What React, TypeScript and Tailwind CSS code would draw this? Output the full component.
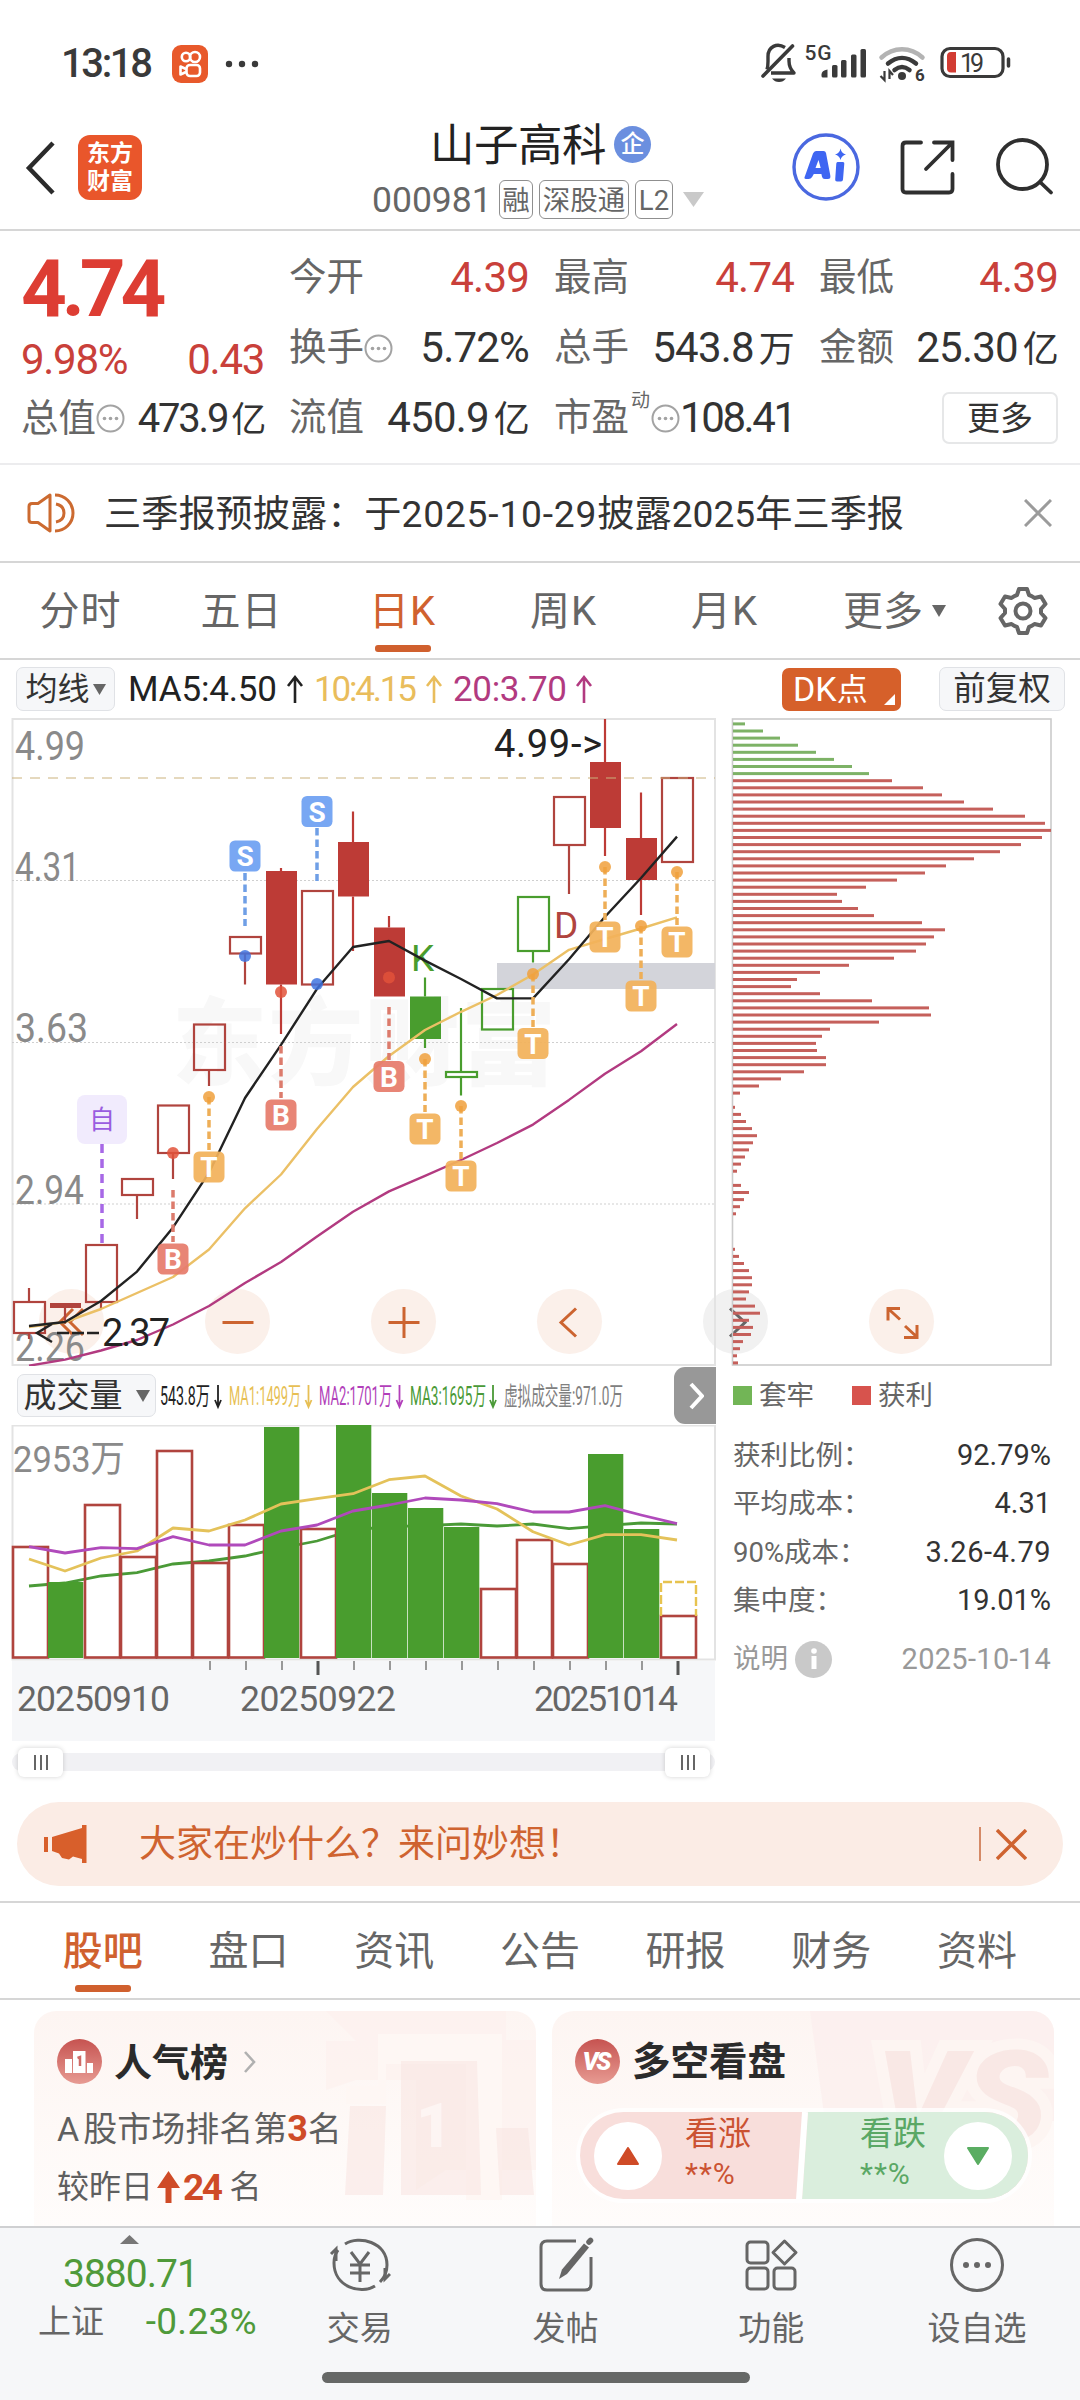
import type { ReactNode } from "react";
import clsx from "clsx";

type Candle = {
  kind: "hollow" | "solid";
  color: string;
  top: number;
  bottom: number;
  high?: number;
  low?: number;
};

const RED = "#bd3b36";
const RED_LINE = "#b0443e";
const GREEN = "#499d2e";

// x centre of the i-th trading day, shared by both charts
const cx = (i: number) => 29 + 36 * i;

const CANDLES: Candle[] = [
  { kind: "hollow", color: RED_LINE, high: 1288, top: 1302, bottom: 1333, low: 1339 },
  { kind: "solid", color: RED_LINE, top: 1303, bottom: 1308, low: 1324 },
  { kind: "hollow", color: RED_LINE, top: 1245, bottom: 1302, low: 1308 },
  { kind: "hollow", color: RED_LINE, top: 1179, bottom: 1195, low: 1219 },
  { kind: "hollow", color: RED_LINE, top: 1105.5, bottom: 1153, low: 1179 },
  { kind: "hollow", color: RED_LINE, top: 1024.5, bottom: 1070, low: 1086 },
  { kind: "hollow", color: RED_LINE, top: 937, bottom: 953.5, low: 984.5 },
  { kind: "solid", color: RED, high: 868, top: 871, bottom: 984.5, low: 1034 },
  { kind: "hollow", color: RED_LINE, top: 891, bottom: 984.5 },
  { kind: "solid", color: RED, high: 811.5, top: 842, bottom: 896.5, low: 951 },
  { kind: "solid", color: RED, high: 916, top: 927.5, bottom: 996.5 },
  { kind: "solid", color: GREEN, high: 977.5, top: 996.5, bottom: 1039, low: 1048 },
  { kind: "hollow", color: GREEN, high: 1008, top: 1072, bottom: 1077, low: 1095.5 },
  { kind: "hollow", color: GREEN, top: 989, bottom: 1029.5 },
  { kind: "hollow", color: GREEN, top: 897, bottom: 951, low: 962.5 },
  { kind: "hollow", color: RED_LINE, top: 797, bottom: 845, low: 894 },
  { kind: "solid", color: RED, high: 719, top: 762, bottom: 828, low: 856 },
  { kind: "solid", color: RED, high: 792.5, top: 838, bottom: 880, low: 915 },
  { kind: "hollow", color: RED_LINE, top: 778, bottom: 862 },
];

const MA5 = [1326, 1322, 1301, 1271.6, 1227.4, 1172.7, 1098, 1044.8, 988.8, 947, 941, 960.6, 979, 998.4, 998.4, 959.3, 916.8, 878, 836.6];
const MA10 = [1327, 1322, 1309, 1293, 1277, 1249.5, 1208.3, 1174.5, 1129, 1087, 1056, 1030, 1011.8, 995, 974.5, 949.8, 939, 928.5, 917.3];
const MA20 = [1365.7, 1359.6, 1350.5, 1340, 1324.5, 1306, 1283, 1262, 1236.5, 1211.8, 1191.4, 1175.8, 1160, 1143, 1124.6, 1099.9, 1073.8, 1051.3, 1024];

const MARKS = [
  { i: 6, t: "S", box: 840.5, from: 873, to: 926, dot: 956 },
  { i: 8, t: "S", box: 796, from: 828, to: 881, dot: 984 },
  { i: 7, t: "B", box: 1099.5, from: 1046, to: 1098, dot: 992 },
  { i: 4, t: "B", box: 1243.5, from: 1190, to: 1242, dot: 1153 },
  { i: 10, t: "B", box: 1061, from: 1007, to: 1060, dot: 977.5 },
  { i: 5, t: "T", box: 1151.5, from: 1097, to: 1150, dot: 1097 },
  { i: 11, t: "T", box: 1113.5, from: 1059, to: 1112, dot: 1059 },
  { i: 12, t: "T", box: 1160.5, from: 1106, to: 1159, dot: 1106 },
  { i: 14, t: "T", box: 1028, from: 974, to: 1027, dot: 974 },
  { i: 16, t: "T", box: 921.5, from: 867, to: 920, dot: 867 },
  { i: 17, t: "T", box: 980.5, from: 926, to: 979, dot: 926 },
  { i: 18, t: "T", box: 926.5, from: 872, to: 925, dot: 872 },
];

const MARK_COLORS: Record<string, { box: string; line: string; dot: string }> = {
  S: { box: "#6ea0f2", line: "#6f9fe6", dot: "#3f74e0" },
  B: { box: "#e67c6c", line: "#dc7b6c", dot: "#e2523a" },
  T: { box: "#f2b15a", line: "#eeae57", dot: "#f0a03c" },
};

const TRAPPED = [12, 30, 47, 65, 83, 101, 119, 136];
const PROFIT = [
  159, 190, 209, 231, 260, 292, 312, 318, 309, 288, 267, 241, 213, 192, 164, 133, 104, 109, 125, 141, 189, 212, 201, 193,
  183, 161, 116, 87, 64, 58, 87, 139, 196, 198, 146, 97, 89, 83, 84, 93, 93, 71, 48, 26, 7, 0, 2, 8, 13, 19, 24, 20, 16, 12,
  8, 4, 0, 8, 16, 11, 7, 3, 0, 0, 0, 0, 2, 6, 11, 16, 19, 19, 16, 13, 22, 27, 16, 20, 18, 10, 7, 4, 5,
];

const VOLUMES: [number, boolean][] = [
  [1547, true], [1582, false], [1505, true], [1557, true], [1451, true], [1563, true], [1525, true],
  [1427, false], [1529, true], [1425, false], [1493, false], [1508, false], [1527, false], [1589, true],
  [1540, true], [1564, true], [1454, false], [1529, false], [1616, true],
];
const VMA1 = [1559, 1571, 1558, 1551, 1528, 1531, 1520, 1504, 1498.7, 1493.7, 1479.7, 1476, 1496, 1509, 1531.7, 1545, 1534.7, 1534.7, 1540];
const VMA2 = [1546.7, 1553, 1547.7, 1548.7, 1536.7, 1545, 1545, 1531, 1525, 1511, 1505, 1498, 1500, 1503.7, 1512, 1512, 1505.7, 1515, 1523.7];
const VMA3 = [1586, 1583, 1576, 1572.7, 1564, 1561, 1556, 1548, 1541, 1530, 1526.7, 1525.7, 1524, 1526, 1524, 1528.7, 1525.7, 1523, 1524];

const line = (ys: number[]) => ys.map((y, i) => `${cx(i)},${y}`).join(" ");

function StatusBar() {
  return (
    <div className="flex h-[100px] items-end pb-[17px] pl-[61px] pr-[68px] text-[#3a3a3a]">
      <span className="flex h-[38px] w-[111px] items-center text-[40px] leading-none font-medium tracking-[-2.4px]">13:18</span>
      <svg width="36" height="38" viewBox="0 0 36 38" fill="none">
        <rect width="36" height="38" rx="9" fill="#e8592b" />
        <g stroke="#fff" strokeWidth="2.6">
          <circle cx="14" cy="12" r="4.2" />
          <circle cx="23" cy="12" r="5" />
          <rect x="14.500" y="20" width="13.500" height="11" rx="3.500" />
          <path d="M14 24l-5.500-2.500v8l5.500-2.500" strokeLinejoin="round" />
        </g>
      </svg>
      <svg className="ml-4" width="36" height="38" viewBox="0 0 36 38" fill="#3a3a3a">
        <circle cx="5" cy="19" r="3.200" />
        <circle cx="18" cy="19" r="3.200" />
        <circle cx="31" cy="19" r="3.200" />
      </svg>
      <svg className="-mb-[10px] ml-auto" width="254" height="70" viewBox="758 24 254 70" fill="none">
        <path d="M771 74h23c-4-4-5-7-5-12v-3M785 48.500c-8-5-17-1-17 9v5c0 3 0 5-1 8" stroke="#3a3a3a" strokeWidth="3.400" strokeLinejoin="round" />
        <path d="M792.500 47L763 77" stroke="#3a3a3a" strokeWidth="3.600" strokeLinecap="round" />
        <path d="M772 79.500h14c-2 2.500-4 3.500-7 3.500s-5-1-7-3.500z" fill="#3a3a3a" />
        <text x="804.500" y="61" fontSize="21" fontWeight="500" fill="#3a3a3a" textLength="27">5G</text>
        <g fill="#3a3a3a">
          <path d="M821.500 75.500q0-4 6-5v8h-4.500q-1.500 0-1.500-1.500z" />
          <rect x="832" y="66" width="5.500" height="12.500" rx="1.500" />
          <rect x="841" y="61" width="5.500" height="17.500" rx="1.500" />
          <rect x="851" y="55.500" width="5.500" height="23" rx="1.500" />
          <rect x="860.500" y="50" width="5.500" height="28.500" rx="1.500" />
        </g>
        <g strokeLinecap="round">
          <path d="M881.500 58.500c12-11 29-11 41 0" stroke="#b3b3b3" strokeWidth="4.500" />
          <path d="M888 64.500c9-7.500 19-7.500 28 0" stroke="#3a3a3a" strokeWidth="4.500" />
          <path d="M894.500 71c5-4 10-4 15 0" stroke="#3a3a3a" strokeWidth="4.500" />
        </g>
        <circle cx="902" cy="77" r="4" fill="#3a3a3a" />
        <path d="M884.500 72v9l-4-4M889.500 80v-8l3.500 4" stroke="#3a3a3a" strokeWidth="2.200" />
        <text x="915" y="82" fontSize="17" fontWeight="700" fill="#3a3a3a">6</text>
        <rect x="942" y="49.500" width="61" height="28" rx="8" stroke="#3a3a3a" strokeWidth="3.200" />
        <path d="M951 53h5v20.500h-5c-3 0-4-2-4-4V57c0-2 1-4 4-4z" fill="#d23c33" />
        <text x="960" y="72.500" fontSize="25" fill="#3a3a3a" textLength="24">19</text>
        <path d="M1008.500 60v7" stroke="#3a3a3a" strokeWidth="3.500" strokeLinecap="round" />
      </svg>
    </div>
  );
}

function Tag({ children, className }: { children: ReactNode; className: string }) {
  return (
    <span className={clsx("flex h-[39px] items-center justify-center rounded-[6px] border border-[#8f8f8f] pt-[2px] text-[27.500px] leading-none", className)}>
      {children}
    </span>
  );
}

function Header() {
  return (
    <header className="flex h-[131px] border-b-2 border-[#d6d6d6]">
      <div className="flex w-[372px] items-start pt-[35px] pl-6">
        <svg className="mt-[5px]" width="32" height="56" viewBox="0 0 32 56" fill="none" stroke="#2b2b2b" strokeWidth="4.500">
          <path d="M29 3L5 28l24 25" />
        </svg>
        <div className="ml-[22px] flex h-[65px] w-16 flex-col items-center justify-center gap-px rounded-[12px] bg-[#e9562b] text-[23px] leading-[27px] font-bold text-white">
          <span>东方</span>
          <span>财富</span>
        </div>
      </div>
      <div className="flex w-[362px] flex-col pt-[22px]">
        <div className="flex h-[48px] items-center pl-[58px]">
          <h1 className="text-[44.500px] leading-none tracking-[-0.5px] text-[#222]">山子高科</h1>
          <span className="-mt-1 ml-[8px] flex h-[37px] w-[37px] items-center justify-center rounded-full bg-[#6b8fdf] text-[24px] leading-none font-medium text-white">企</span>
        </div>
        <div className="mt-[10px] flex h-[39px] items-center text-[#666]">
          <span className="w-[127px] pt-[2px] text-[35.500px] leading-none">000981</span>
          <Tag className="w-[34px]">融</Tag>
          <Tag className="ml-[6px] w-[90px]">深股通</Tag>
          <Tag className="ml-[6px] w-[38px]">L2</Tag>
          <svg className="ml-[10px]" width="21" height="15" viewBox="0 0 21 15" fill="#c9c9c9">
            <path d="M0 0h21L10.500 15z" />
          </svg>
        </div>
      </div>
      <svg className="ml-[56px]" width="270" height="129" viewBox="790 100 270 129" fill="none">
        <circle cx="826" cy="167" r="32" stroke="#4a68e0" strokeWidth="3.400" />
        <path
          d="M816 151h7.500q2 0 2.500 2l4.300 22.500q.7 3.500-2.500 3.500h-3q-2.300 0-2.800-2.300l-.6-2.700h-7.600l-1.700 3q-1.200 2-3.500 2h-2.600q-2.500 0-1-3l8-22.500q1-2.500 3-2.500zM818.500 160l-3 8h5.200z"
          fill="#3f66f2"
          fillRule="evenodd"
        />
        <path d="M837.500 162h5.500q1.500 0 1.300 1.600l-1.300 16q-.2 1.900-2 1.900h-4q-2 0-1.800-2l1.100-16q.2-1.500 1.200-1.500z" fill="#3f66f2" />
        <path d="M840.500 148.500q1 5 5.500 6q-4.500 1-5.500 5.500q-1-4.500-5.500-5.500q4.500-1 5.500-6z" fill="#3f66f2" />
        <g stroke="#2f2f2f" strokeWidth="3.800" strokeLinecap="round">
          <path d="M921 142.500h-15q-3.500 0-3.500 3.500v43q0 3.500 3.500 3.500h43q3.500 0 3.500-3.500V174M926 169l26-26M934 142.500h18.500V160" />
          <circle cx="1022.500" cy="164.500" r="24.500" />
          <path d="M1040 182l11 10.500" />
        </g>
      </svg>
    </header>
  );
}

function Dots() {
  return (
    <svg width="29" height="29" viewBox="0 0 29 29" fill="none">
      <circle cx="14.500" cy="14.500" r="13" stroke="#a3a3a3" strokeWidth="2" />
      <g fill="#a3a3a3">
        <circle cx="8.500" cy="14.500" r="1.800" />
        <circle cx="14.500" cy="14.500" r="1.800" />
        <circle cx="20.500" cy="14.500" r="1.800" />
      </g>
    </svg>
  );
}

function Stat({ label, value, unit, red, dots, sup }: { label: string; value: string; unit?: string; red?: boolean; dots?: boolean; sup?: string }) {
  return (
    <div className="flex h-[70px] items-center justify-between leading-none whitespace-nowrap">
      <span className="flex items-center text-[37.500px] text-[#666]">
        {label}
        {sup && <span className="-mt-9 ml-[2px] w-[20px] text-[19px]">{sup}</span>}
        {dots && <Dots />}
      </span>
      <span className={clsx("text-[42px]", red ? "text-[#c9403a]" : "text-[#333]", sup ? "tracking-[-2.4px]" : "tracking-[-0.8px]")}>
        {value}
        {unit && <span className="ml-[5px] text-[36px]">{unit}</span>}
      </span>
    </div>
  );
}

function Quote() {
  return (
    <section className="flex h-[234px] gap-[25px] border-b-2 border-[#ececee] pt-[12px] pr-[22px] pl-[21px]">
      <div className="w-[243px]">
        <div className="flex h-[92px] items-center text-[80px] leading-none font-bold tracking-[-5.200px] text-[#dd3d33]">4.74</div>
        <div className="flex h-[49px] items-center justify-between text-[42px] leading-none tracking-[-1.300px] text-[#c9403a]">
          <span>9.98%</span>
          <span>0.43</span>
        </div>
        <div className="flex h-[69px] items-center justify-between text-[37.500px] leading-none">
          <span className="flex items-center text-[#666]">总值<Dots /></span>
          <span className="text-[40px] tracking-[-2.200px] whitespace-nowrap text-[#333]">473.9<span className="ml-1 text-[35px]">亿</span></span>
        </div>
      </div>
      <div className="w-[240px]">
        <Stat label="今开" value="4.39" red />
        <Stat label="换手" value="5.72%" dots />
        <Stat label="流值" value="450.9" unit="亿" />
      </div>
      <div className="w-[240px]">
        <Stat label="最高" value="4.74" red />
        <Stat label="总手" value="543.8" unit="万" />
        <Stat label="市盈" value="108.41" sup="动" dots />
      </div>
      <div className="w-[239px]">
        <Stat label="最低" value="4.39" red />
        <Stat label="金额" value="25.30" unit="亿" />
        <div className="flex h-[70px] items-center justify-end">
          <button className="h-[52px] w-[116px] rounded-[7px] border-2 border-[#e6e7e8] text-[33px] leading-none text-[#333]">更多</button>
        </div>
      </div>
    </section>
  );
}

function Notice() {
  return (
    <div className="flex h-[98px] items-center border-b-2 border-[#d6d6d6] pl-[26px]">
      <svg width="52" height="44" viewBox="0 0 52 44" fill="none" stroke="#cc6a30" strokeWidth="3">
        <path d="M24 4L12 12.500H6q-3 0-3 3v13q0 3 3 3h6L24 40z" strokeLinejoin="round" />
        <path d="M29 4c10 0 18 8 18 18s-8 18-18 18M30 13c5 1 8 4.500 8 9s-3 8-8 9" />
      </svg>
      <p className="ml-[26px] pt-[3px] text-[37.200px] leading-none text-[#333]">
        三季报预披露：于<span className="tracking-[0.800px]">2025-10-29</span>披露2025年三季报
      </p>
      <svg className="ml-auto mr-[28px]" width="28" height="28" viewBox="0 0 28 28" stroke="#9b9b9b" strokeWidth="3">
        <path d="M1 1l26 26M27 1L1 27" />
      </svg>
    </div>
  );
}

function PeriodTabs() {
  return (
    <nav className="flex h-[97px] items-center border-b-2 border-[#d6d6d6] text-[40px] leading-none text-[#666]">
      {["分时", "五日", "日K", "周K", "月K"].map((t) => (
        <div key={t} className={clsx("relative flex h-full w-[161px] items-center justify-center pt-[2px] tracking-[1px]", t === "日K" && "text-[#d0612f]")}>
          {t}
          {t === "日K" && <span className="absolute bottom-[6px] h-[7px] w-14 rounded-[3px] bg-[#d0602e]" />}
        </div>
      ))}
      <span className="ml-[38px] pt-[2px]">更多</span>
      <svg className="ml-[9px]" width="14" height="12" viewBox="0 0 14 12" fill="#666">
        <path d="M0 0h14L7 12z" />
      </svg>
      <svg className="ml-[51px]" width="52" height="52" viewBox="0 0 52 52" fill="none" stroke="#666" strokeWidth="4" strokeLinejoin="round">
        <path d="M22 4h8l2 6q3 1 5.500 3l6.500-1.500 4.500 7.500-4.500 5v4l4.500 5-4.500 7.500-6.500-1.500q-2.500 2-5.500 3l-2 6h-8l-2-6q-3-1-5.500-3L8 40.500 3.500 33 8 28v-4l-4.500-5L8 11.500l6.500 1.500q2.500-2 5.500-3z" />
        <circle cx="26" cy="26" r="7.500" />
      </svg>
    </nav>
  );
}

function MaBar() {
  return (
    <div className="flex h-[58px] items-center pl-4 leading-none">
      <span className="flex h-[44px] w-[99px] items-center justify-center rounded-[7px] border border-[#e0e2e6] bg-[#f6f7f9] text-[32px] text-[#333]">
        均线
        <svg className="ml-[3px]" width="13" height="11" viewBox="0 0 13 11" fill="#666">
          <path d="M0 0h13L6.500 11z" />
        </svg>
      </span>
      <svg className="ml-[13px]" width="470" height="50" viewBox="128 665 470 50" fontSize="35" fill="none">
        <text x="128" y="702" textLength="149" fill="#222">MA5:4.50</text>
        <text x="314" y="702" textLength="103" fill="#e9bd5c">10:4.15</text>
        <text x="453" y="702" textLength="114" fill="#b23a80">20:3.70</text>
        <g strokeWidth="2.600">
          <path d="M295 704V678M288 687l7-9 7 9" stroke="#222" />
          <path d="M434 704V678M427 687l7-9 7 9" stroke="#e9bd5c" />
          <path d="M584 704V678M577 687l7-9 7 9" stroke="#b23a80" />
        </g>
      </svg>
      <span className="relative ml-[184px] flex h-[43px] w-[119px] items-center rounded-[7px] bg-[#d6602a] pl-[11px] text-[34px] text-white">
        DK<span className="text-[31px]">点</span>
        <svg className="absolute right-[6px] bottom-[6px]" width="11" height="11" viewBox="0 0 11 11" fill="#fff">
          <path d="M11 0v11H0z" />
        </svg>
      </span>
      <span className="ml-[38px] flex h-[44px] w-[126px] items-center justify-center rounded-[7px] border border-[#e0e2e6] bg-[#f6f7f9] text-[32.500px] text-[#333]">前复权</span>
    </div>
  );
}

function KChart() {
  return (
    <svg className="relative" width="720" height="648" viewBox="0 718 720 648" fill="none">
      <rect x="12.500" y="719" width="702.500" height="646" stroke="#e3e3e3" strokeWidth="2" />
      <text x="172" y="1078" fontSize="95" fontWeight="900" fill="#f8f8f8" textLength="384">东方财富</text>
      <path d="M12 880.500h703M12 1042.500h703M12 1204h703" stroke="#cfcfcf" strokeDasharray="2 2" />
      <rect x="497" y="963" width="218" height="26" fill="#d3d4da" />
      <g fill="#8a8a8a" fontSize="40">
        <text x="15" y="760" textLength="70" lengthAdjust="spacingAndGlyphs">4.99</text>
        <text x="15" y="881" textLength="65" lengthAdjust="spacingAndGlyphs">4.31</text>
        <text x="15" y="1042" textLength="73" lengthAdjust="spacingAndGlyphs">3.63</text>
        <text x="15" y="1204" textLength="69" lengthAdjust="spacingAndGlyphs">2.94</text>
        <text x="15" y="1361" textLength="70" lengthAdjust="spacingAndGlyphs">2.26</text>
      </g>
      {CANDLES.map((c, i) => (
        <g key={i}>
          {c.high !== undefined && <path d={`M${cx(i)} ${c.high}V${c.top}`} stroke={c.color} strokeWidth="2.200" />}
          {c.low !== undefined && <path d={`M${cx(i)} ${c.bottom}V${c.low}`} stroke={c.color} strokeWidth="2.200" />}
          {c.kind === "solid" ? (
            <rect x={cx(i) - 15} y={c.top} width="31" height={c.bottom - c.top} fill={c.color} />
          ) : (
            <rect x={cx(i) - 15} y={c.top} width="31" height={c.bottom - c.top} stroke={c.color} strokeWidth="2.200" fill={i === 12 ? "#fff" : "none"} />
          )}
        </g>
      ))}
      <path d="M12 778h703" stroke="#cbb27c" strokeDasharray="10 8" />
      <text x="411" y="971" fontSize="37" fill={GREEN}>K</text>
      <text x="554" y="938" fontSize="37" fill={RED_LINE}>D</text>
      <text x="494" y="757" fontSize="38" fill="#222" textLength="108">4.99-&gt;</text>
      <g strokeWidth="2.400" strokeLinejoin="round">
        <polyline points={line(MA20)} stroke="#b23a80" />
        <polyline points={line(MA10)} stroke="#ebc066" />
        <polyline points={line(MA5)} stroke="#222" />
      </g>
      {MARKS.map((m) => {
        const c = MARK_COLORS[m.t];
        return (
          <g key={m.i}>
            <path d={`M${cx(m.i)} ${m.from}V${m.to}`} stroke={c.line} strokeWidth="3.500" strokeDasharray="7.500 4" />
            <circle cx={cx(m.i)} cy={m.dot} r="6" fill={c.dot} fillOpacity="0.85" />
            <rect x={cx(m.i) - 15.5} y={m.box} width="31" height="31" rx="5.500" fill={c.box} fillOpacity="0.93" />
            <text x={cx(m.i)} y={m.box + 25.5} fontSize="28" fontWeight="700" fill="#fff" textAnchor="middle">{m.t}</text>
          </g>
        );
      })}
      <path d="M102 1144v101" stroke="#a768e6" strokeWidth="3.500" strokeDasharray="9 6" />
      <rect x="77" y="1095" width="50" height="49" rx="8" fill="#f1ebfd" />
      <text x="102" y="1129" fontSize="26" fill="#9a5ce0" textAnchor="middle">自</text>
      <text x="102" y="1346" fontSize="38" fill="#222" textLength="68">2.37</text>
      <path d="M52 1324l-15 9 15 9" stroke="#222" strokeWidth="2.500" />
      <path d="M57 1333h45" stroke="#222" strokeWidth="2.500" strokeDasharray="12 3" />
    </svg>
  );
}

function CostProfile() {
  const bars = [...TRAPPED, ...PROFIT];
  return (
    <svg className="relative" width="324" height="648" viewBox="730 718 324 648" fill="none">
      <rect x="732.500" y="719" width="318.500" height="646" stroke="#cbcbcb" strokeWidth="1.600" />
      {bars.map((w, i) => (
        <rect key={i} x="733" y={722.4 + i * 7.1} width={w} height="3" fill={i < TRAPPED.length ? "#7db266" : "#c5605b"} />
      ))}
    </svg>
  );
}

function RoundButton({ gray, children }: { gray?: boolean; children: ReactNode }) {
  return (
    <button className={clsx("flex h-[65px] w-[65px] items-center justify-center rounded-full", gray ? "bg-[#f1f1f1] text-[#666]" : "bg-[#fbf0ea] text-[#cc6430]")}>
      <svg width="40" height="40" viewBox="0 0 40 40" fill="none" stroke="currentColor" strokeWidth="3">
        {children}
      </svg>
    </button>
  );
}

function Charts() {
  return (
    <div className="relative flex h-[648px] justify-between pr-[26px]">
      {/* the buttons lie under the plots, so candles and labels stay readable */}
      <div className="absolute top-[571px] left-[39px] flex gap-[101px]">
        <RoundButton><path d="M21 7L8 20l13 13M31 7L18 20l13 13" /></RoundButton>
        <RoundButton><path d="M4.500 20.500h31" /></RoundButton>
        <RoundButton><path d="M4.500 20.500h31M20 5v31" /></RoundButton>
        <RoundButton><path d="M26 6.500L11 20.500l15 14" /></RoundButton>
        <RoundButton gray><path d="M14 6.500l15 14-15 14" /></RoundButton>
        <RoundButton><path d="M18 6.500H6v12M6 6.500l12 11M23 24l12 11M35 23v12.500H22" /></RoundButton>
      </div>
      <KChart />
      <CostProfile />
    </div>
  );
}

function VolumeHeader() {
  return (
    <div className="flex h-[59px] items-center pl-[17px]">
      <span className="flex h-[43px] w-[139px] items-center justify-center rounded-[7px] border border-[#e0e2e6] bg-[#f6f7f9] text-[33px] leading-none text-[#333]">
        成交量
        <svg className="ml-[13px]" width="14" height="12" viewBox="0 0 14 12" fill="#666">
          <path d="M0 0h14L7 12z" />
        </svg>
      </span>
      <svg className="ml-[3px]" width="470" height="59" viewBox="159 1366 470 59" fontSize="25.500" fill="none">
        <g>
          <text x="160" y="1405" fill="#222" textLength="50" lengthAdjust="spacingAndGlyphs">543.8万</text>
          <text x="229" y="1405" fill="#e7bf55" textLength="72" lengthAdjust="spacingAndGlyphs">MA1:1499万</text>
          <text x="319" y="1405" fill="#b23fba" textLength="73" lengthAdjust="spacingAndGlyphs">MA2:1701万</text>
          <text x="410" y="1405" fill="#4a9a37" textLength="76" lengthAdjust="spacingAndGlyphs">MA3:1695万</text>
          <text x="504" y="1405" fill="#808080" textLength="119" lengthAdjust="spacingAndGlyphs">虚拟成交量:971.0万</text>
        </g>
        <g strokeWidth="1.800">
          <path d="M218 1385v22M215 1400l3 7 3-7" stroke="#222" />
          <path d="M308.500 1385v22M305.500 1400l3 7 3-7" stroke="#e7bf55" />
          <path d="M399.500 1385v22M396.500 1400l3 7 3-7" stroke="#b23fba" />
          <path d="M493 1385v22M490 1400l3 7 3-7" stroke="#4a9a37" />
        </g>
      </svg>
      <span className="ml-[45px] flex h-[57px] w-[42px] items-center justify-center rounded-l-[11px] bg-[#989898]">
        <svg width="18" height="28" viewBox="0 0 18 28" fill="none" stroke="#fff" strokeWidth="4">
          <path d="M5 2l11 12L5 26" />
        </svg>
      </span>
    </div>
  );
}

function VolumeChart() {
  return (
    <svg width="720" height="316" viewBox="0 1425 720 316" fill="none">
      <rect x="12.500" y="1425.500" width="702.500" height="234" stroke="#e3e3e3" strokeWidth="2" />
      <rect x="12" y="1661" width="703" height="80" fill="#f6f7f9" />
      <polyline points={line(VMA3)} stroke="#4a9a37" strokeWidth="2.800" />
      {VOLUMES.map(([y, up], i) =>
        up ? (
          <rect key={i} x={cx(i) - 16} y={y} width="35" height={1657.5 - y} stroke="#b0443e" strokeWidth="2.600" />
        ) : (
          <rect key={i} x={cx(i) - 17} y={y} width="35.300" height={1658 - y} fill={GREEN} />
        ),
      )}
      <path d="M661 1616v-34h35v34" stroke="#e7c34f" strokeWidth="2.400" strokeDasharray="9 3" />
      <g strokeWidth="2.800" strokeLinejoin="round">
        <polyline points={line(VMA1)} stroke="#e4c25a" />
        <polyline points={line(VMA2)} stroke="#b04abb" />
      </g>
      <text x="13" y="1472" fontSize="37" fill="#8a8a8a" textLength="112" lengthAdjust="spacingAndGlyphs">2953万</text>
      {VOLUMES.map((_, i) => {
        const big = i === 8 || i === 18;
        return i > 4 && <path key={i} d={`M${cx(i) + 1} 1661v${big ? 14 : 9}`} stroke={big ? "#555" : "#999"} strokeWidth={big ? 3 : 2} />;
      })}
      <g fill="#666" fontSize="35.500">
        <text x="17" y="1711" textLength="153">20250910</text>
        <text x="240" y="1711" textLength="156">20250922</text>
        <text x="534" y="1711" textLength="144">20251014</text>
      </g>
    </svg>
  );
}

function Handle() {
  return (
    <span className="flex h-[29px] w-[45px] items-center justify-center gap-[4px] rounded-[6px] bg-white shadow-[0_0_5px_rgba(0,0,0,0.18)]">
      <i className="h-[15px] w-[2px] bg-[#666]" />
      <i className="h-[15px] w-[2px] bg-[#666]" />
      <i className="h-[15px] w-[2px] bg-[#666]" />
    </span>
  );
}

function RangeSlider() {
  return (
    <div className="mt-[12px] ml-3 flex h-[18px] w-[703px] items-center justify-between rounded-full bg-[#f1f1f4] pr-[5px] pl-[6px]">
      <Handle />
      <Handle />
    </div>
  );
}

function CostStats() {
  const rows = [
    ["获利比例：", "92.79%"],
    ["平均成本：", "4.31"],
    ["90%成本：", "3.26-4.79"],
    ["集中度：", "19.01%"],
  ];
  return (
    <div className="w-[319px] text-[27.500px] leading-none text-[#666]">
      <div className="flex h-[59px] items-center pl-px">
        <i className="h-[19px] w-[19px] bg-[#72b556]" />
        <span className="ml-[7px] w-[93px]">套牢</span>
        <i className="h-[19px] w-[19px] bg-[#d7534d]" />
        <span className="ml-[7px]">获利</span>
      </div>
      <div className="mt-[6px]">
        {rows.map(([k, v]) => (
          <div key={k} className="flex h-[48.500px] items-center justify-between">
            <span className="pl-px">{k}</span>
            <span className={clsx("text-[29px] text-[#333]", v.includes("-") && "tracking-[0.500px]")}>{v}</span>
          </div>
        ))}
      </div>
      <div className="mt-[5px] flex h-[58px] items-center text-[#999]">
        <span className="pl-px">说明</span>
        <span className="ml-[7px] flex h-[37px] w-[37px] items-center justify-center rounded-full bg-[#c9c9c9]">
          <svg width="8" height="22" viewBox="0 0 8 22" fill="#fff">
            <circle cx="4" cy="3" r="2.800" />
            <rect x="1.500" y="8" width="5" height="13" />
          </svg>
        </span>
        <span className="ml-auto text-[29px] tracking-[0.300px]">2025-10-14</span>
      </div>
    </div>
  );
}

function AskBanner() {
  return (
    <div className="mx-[17px] flex h-[84px] items-center rounded-full bg-[#fbece5] text-[#cf6330]">
      <svg className="ml-[27px]" width="44" height="38" viewBox="0 0 44 38" fill="#d85f2b">
        <path d="M0 12h4v15H0zM8 12L38 3V0h4.500v38H38v-4l-9-2.500-4 3-7-1.500-3-4.500-7-2.500z" />
      </svg>
      <span className="ml-[51px] pt-px text-[37px] leading-none">大家在炒什么？来问妙想！</span>
      <i className="ml-auto h-[34px] w-[2px] bg-[#d58a67]" />
      <svg className="mr-[36px] ml-[15px]" width="31" height="31" viewBox="0 0 31 31" stroke="#cf6330" strokeWidth="3.400">
        <path d="M1 1l29 29M30 1L1 30" />
      </svg>
    </div>
  );
}

function SectionTabs() {
  return (
    <nav className="mt-[15px] flex h-[99px] border-y-2 border-[#d6d6d6] px-[30px] text-[40px] leading-none text-[#666]">
      {["股吧", "盘口", "资讯", "公告", "研报", "财务", "资料"].map((t, i) => (
        <div key={t} className={clsx("relative flex w-[145.700px] items-center justify-center pt-[3px]", i === 0 && "font-medium text-[#d0612f]")}>
          {t}
          {i === 0 && <span className="absolute bottom-[6px] h-[7px] w-14 rounded-[3px] bg-[#d0602e]" />}
        </div>
      ))}
    </nav>
  );
}

function RankCard() {
  return (
    <div className="relative h-[240px] w-[502px] overflow-hidden rounded-[22px] bg-linear-to-b from-[#fdf5f2] to-[#fffdfc] pl-[23px]">
      <svg className="absolute top-0 right-0" width="260" height="200" viewBox="276 2011 260 200">
        <path d="M326 2011h180v29h30v130h-90l-30 20V2080h-60l-30 10V2041h30z" fill="#fcf1ee" fillOpacity="0.7" />
        <path d="M378 2034h124v166h-36V2064h-80v40h-40v-18h32z" fill="#fef7f4" />
        <path d="M401 2061h76l4 134h-80zM350 2106h36l-3 89h-38zM496 2128h32l6 67h-34z" fill="#f9e6e3" fillOpacity="0.6" />
        <text x="416" y="2147" fontSize="62" fontWeight="900" fill="#fdf5f3">1</text>
      </svg>
      <div className="relative flex h-[101px] items-center">
        <svg width="45" height="45" viewBox="0 0 45 45">
          <defs>
            <linearGradient id="rankBadge" x1="0" y1="0" x2="0" y2="1">
              <stop offset="0" stopColor="#c65350" />
              <stop offset="1" stopColor="#e79b93" />
            </linearGradient>
          </defs>
          <circle cx="22.500" cy="22.500" r="22.500" fill="url(#rankBadge)" />
          <path d="M8 20h7v14H8zM16 12h12.500v22H16zM30 24h6v10h-6z" fill="#fff" />
          <path d="M20.500 19l2.500-1v9" stroke="#cf6a65" strokeWidth="2.500" fill="none" />
        </svg>
        <h2 className="ml-[12px] pt-[2px] text-[38px] leading-none font-bold text-[#2b2b2b]">人气榜</h2>
        <svg className="ml-[15px]" width="13" height="22" viewBox="0 0 13 22" fill="none" stroke="#b0b0b0" strokeWidth="2.600">
          <path d="M2 1l9 10-9 10" />
        </svg>
      </div>
      <div className="relative flex h-[32px] items-center pt-px text-[34px] leading-none text-[#5f5f5f]">
        A<span className="ml-[4px]">股市场排名第</span><b className="text-[36px] font-bold text-[#cf4b27]">3</b>名
      </div>
      <div className="relative mt-[27px] flex h-[32px] items-center text-[32px] leading-none text-[#5f5f5f]">
        较昨日
        <svg className="ml-[4px]" width="23" height="32" viewBox="0 0 23 32" fill="#cf4b27">
          <path d="M11.500 0L23 17h-8.500v15h-6V17H0z" />
        </svg>
        <b className="ml-[3px] text-[37px] font-bold tracking-[-2.500px] text-[#cf4b27]">24</b>
        <span className="ml-[9px]">名</span>
      </div>
    </div>
  );
}

function DuelCard() {
  return (
    <div className="relative h-[240px] w-[502px] overflow-hidden rounded-[22px] bg-linear-to-b from-[#fdf5f2] to-[#fffdfc] pl-[23px]">
      <svg className="absolute top-0 right-0" width="250" height="200" viewBox="804 2011 250 200">
        <path d="M810 2011h244v110H825z" fill="#fbefed" fillOpacity="0.8" />
        <text x="876" y="2142" fontSize="128" fontWeight="900" fontStyle="italic" fill="#f9e8e5" stroke="#fdf5f2" strokeWidth="22" paintOrder="stroke" textLength="172" lengthAdjust="spacingAndGlyphs">VS</text>
      </svg>
      <div className="relative flex h-[101px] items-center">
        <svg width="45" height="45" viewBox="0 0 45 45">
          <circle cx="22.500" cy="22.500" r="22.500" fill="url(#rankBadge)" />
          <text x="22" y="31" fontSize="25" fontWeight="900" fontStyle="italic" fill="#fff" textAnchor="middle" textLength="29">VS</text>
        </svg>
        <h2 className="ml-[12px] pt-[2px] text-[38.500px] leading-none font-bold text-[#2b2b2b]">多空看盘</h2>
      </div>
      <div className="relative ml-[5px] flex h-[87px] w-[448px] items-center overflow-hidden rounded-full bg-[#f8dedb] leading-none ring-4 ring-white/80">
        <svg className="absolute inset-0" width="448" height="88" viewBox="0 0 448 88">
          <path d="M228 0h220v88H222z" fill="#daeedd" />
          <path d="M225 0l-6 88" stroke="#fff" strokeWidth="6" />
        </svg>
        <span className="relative ml-[14px] flex h-[68px] w-[68px] items-center justify-center rounded-full bg-white">
          <svg width="22" height="18" viewBox="0 0 22 18" fill="#cf4b27" stroke="#cf4b27" strokeWidth="2" strokeLinejoin="round">
            <path d="M11 1l10 16H1z" />
          </svg>
        </span>
        <div className="relative -mt-[5px] ml-[23px] flex w-[70px] flex-col gap-[9px] text-[#cb5232]">
          <span className="text-[33px]">看涨</span>
          <span className="text-[30px] tracking-[1px]">**%</span>
        </div>
        <div className="relative -mt-[5px] ml-[105px] flex w-[70px] flex-col gap-[9px] text-[#5aa865]">
          <span className="text-[33px]">看跌</span>
          <span className="text-[30px] tracking-[1px]">**%</span>
        </div>
        <span className="relative ml-[14px] flex h-[68px] w-[68px] items-center justify-center rounded-full bg-white">
          <svg width="22" height="18" viewBox="0 0 22 18" fill="#5aad62" stroke="#5aad62" strokeWidth="2" strokeLinejoin="round">
            <path d="M11 17L1 1h20z" />
          </svg>
        </span>
      </div>
    </div>
  );
}

function NavItem({ label, children }: { label: string; children: ReactNode }) {
  return (
    <div className="flex w-[205.700px] flex-col items-center text-[33px] leading-none text-[#666]">
      <svg className="mt-[6px]" width="62" height="62" viewBox="0 0 62 62" fill="none" stroke="#666" strokeWidth="3">
        {children}
      </svg>
      <span className="mt-[16px]">{label}</span>
    </div>
  );
}

function BottomNav() {
  return (
    <footer className="h-[174px] border-t-2 border-[#cfd0d2] bg-[#f6f7f9]">
      <div className="flex h-[144px]">
        <div className="flex w-[257px] flex-col leading-none text-[#4f9a3a]">
          <svg className="mt-[7px] ml-[120px]" width="19" height="9" viewBox="0 0 19 9" fill="#777">
            <path d="M9.500 0L19 9H0z" />
          </svg>
          <span className="mt-[11px] ml-[63px] text-[39px] tracking-[-1px]">3880.71</span>
          <div className="mt-[7px] flex h-[40px] items-center justify-between pl-[38px]">
            <span className="text-[33px] text-[#666]">上证</span>
            <span className="text-[37px] tracking-[0.300px]">-0.23%</span>
          </div>
        </div>
        <NavItem label="交易">
          <path d="M16 10c14-9 42-2 42 21 0 8-3 13-7 17M46 52C32 61 5 53 5 29c0-5 1-9 4-13" />
          <path d="M2 20l5-5v12M61 40l-5 5V34" />
          <path d="M22 18l9 12 9-12M21 31h20M21 39h20M31 30v18" />
        </NavItem>
        <NavItem label="发帖">
          <path d="M41 7H12q-6 0-6 6v37q0 6 6 6h38q6 0 6-6V23" />
          <path d="M49 9.500l5 4L32 40l-8 5 3-9.500z" fill="#666" stroke="none" />
          <path d="M54 8l1.500-1.500" strokeWidth="5.500" strokeLinecap="round" />
        </NavItem>
        <NavItem label="功能">
          <rect x="7" y="8" width="21" height="21" rx="3.500" />
          <rect x="7" y="34" width="21" height="21" rx="3.500" />
          <rect x="34" y="34" width="21" height="21" rx="3.500" />
          <path d="M44.500 7L56 18.500 44.500 30 33 18.500z" strokeLinejoin="round" />
        </NavItem>
        <NavItem label="设自选">
          <circle cx="31" cy="31" r="25.500" />
          <g fill="#666" stroke="none">
            <circle cx="20" cy="31" r="3" />
            <circle cx="31" cy="31" r="3" />
            <circle cx="42" cy="31" r="3" />
          </g>
        </NavItem>
      </div>
      <div className="ml-[322px] h-[11px] w-[428px] rounded-full bg-[#666867]" />
    </footer>
  );
}

export default function App() {
  return (
    <div className="flex h-[2400px] w-[1080px] flex-col overflow-hidden bg-white font-[Roboto,'Noto_Sans_CJK_SC',sans-serif] text-[#333]">
      <StatusBar />
      <Header />
      <Quote />
      <Notice />
      <PeriodTabs />
      <MaBar />
      <Charts />
      <div className="flex h-[436px] gap-[12px]">
        <div className="w-[720px]">
          <VolumeHeader />
          <VolumeChart />
          <RangeSlider />
        </div>
        <CostStats />
      </div>
      <AskBanner />
      <SectionTabs />
      <div className="mt-[11px] flex h-[215px] shrink-0 gap-4 overflow-hidden pl-[34px]">
        <RankCard />
        <DuelCard />
      </div>
      <BottomNav />
    </div>
  );
}
